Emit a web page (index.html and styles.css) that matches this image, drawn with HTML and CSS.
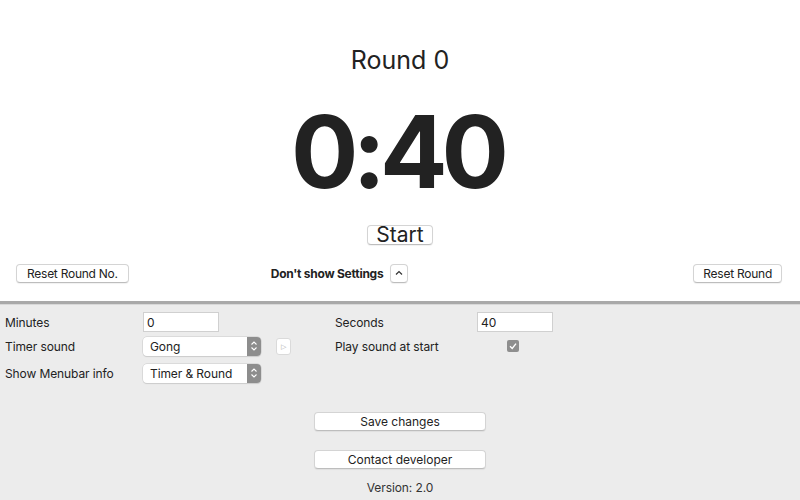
FILE: index.html
```html
<!DOCTYPE html>
<html lang="en">

<head>
  <meta charset="UTF-8" />
  <title>Round Timer</title>
  <link rel="stylesheet" href="styles.css">
</head>

<body>
  <main class="timer">
    <h1 class="round">Round 0</h1>
    <div class="clock">0:40</div>
    <button class="btn start">Start</button>
  </main>

  <div class="controls">
    <button class="btn small">Reset Round No.</button>
    <div class="toggle">
      <span>Don't show Settings</span>
      <button class="btn chevron">
        <svg width="8" height="6" viewBox="0 0 8 6"><path d="M1 4.5 L4 1.5 L7 4.5" fill="none" stroke="#333" stroke-width="1.2"/></svg>
      </button>
    </div>
    <button class="btn small right">Reset Round</button>
  </div>

  <section class="settings">
    <div class="grid">
      <label>Minutes</label>
      <div><input class="field" type="text" value="0"></div>
      <label>Seconds</label>
      <div><input class="field" type="text" value="40"></div>

      <label>Timer sound</label>
      <div class="with-play">
        <div class="select"><span>Gong</span><i class="stepper"><svg width="8" height="12" viewBox="0 0 8 12"><path d="M1.5 4.5 L4 2 L6.5 4.5 M1.5 7.5 L4 10 L6.5 7.5" fill="none" stroke="#fff" stroke-width="1.1"/></svg></i></div>
        <button class="play">&#9655;</button>
      </div>
      <label>Play sound at start</label>
      <div class="check-cell"><span class="check"><svg width="10" height="10" viewBox="0 0 10 10"><path d="M2 5.2 L4.2 7.4 L8 2.6" fill="none" stroke="#fff" stroke-width="1.4"/></svg></span></div>

      <label class="last">Show Menubar info</label>
      <div class="last"><div class="select"><span>Timer &amp; Round</span><i class="stepper"><svg width="8" height="12" viewBox="0 0 8 12"><path d="M1.5 4.5 L4 2 L6.5 4.5 M1.5 7.5 L4 10 L6.5 7.5" fill="none" stroke="#fff" stroke-width="1.1"/></svg></i></div></div>
    </div>

    <div class="actions">
      <button class="btn wide">Save changes</button>
      <button class="btn wide">Contact developer</button>
      <p class="version">Version: 2.0</p>
    </div>
  </section>
</body>

</html>
```

FILE: styles.css
```css
* {
  margin: 0;
  padding: 0;
  box-sizing: border-box;
}

body {
  font-family: 'Inter', 'Liberation Sans', sans-serif;
  background: #fff;
  color: #222;
  width: 800px;
  height: 500px;
  overflow: hidden;
}

.btn {
  font-family: inherit;
  background: #fff;
  border: 1px solid #d4d4d4;
  border-bottom-color: #bdbdbd;
  border-radius: 4px;
  color: #222;
  box-shadow: 0 1px 1px rgba(0, 0, 0, 0.06);
}

/* Timer */
.timer {
  display: flex;
  flex-direction: column;
  align-items: center;
  padding-top: 43px;
}

.round {
  font-size: 25px;
  font-weight: 400;
  line-height: 34px;
  color: #222;
}

.clock {
  font-size: 100px;
  font-weight: 700;
  line-height: 120px;
  margin-top: 15px;
  margin-bottom: -3px;
  letter-spacing: -6px;
  padding-right: 6px;
  color: #222;
}

.start {
  margin-top: 16px;
  width: 66px;
  height: 20px;
  font-size: 21px;
  line-height: 18px;
}

/* Controls row */
.controls {
  display: flex;
  align-items: center;
  padding: 0 18px 0 16px;
  margin-top: 18px;
  height: 20px;
  font-size: 12px;
  letter-spacing: -0.25px;
}

.small {
  height: 19px;
  font-size: 12px;
  letter-spacing: -0.25px;
  padding: 0 10px;
}

.toggle {
  display: flex;
  align-items: center;
  gap: 7px;
  margin-left: 142px;
  font-weight: 700;
}

.chevron {
  width: 18px;
  height: 19px;
  display: flex;
  align-items: center;
  justify-content: center;
}

.right {
  margin-left: auto;
  padding: 0 9px;
}

/* Settings panel */
.settings {
  margin-top: 18px;
  height: 200px;
  background: #ececec;
  border-top: 3px solid #a9a9a9;
  box-shadow: inset 0 1px 0 #d8d8d8;
  font-size: 12px;
  letter-spacing: -0.1px;
  color: #222;
}

.grid {
  display: grid;
  grid-template-columns: 138px 192px 142px auto;
  grid-template-rows: 20px 20px 20px;
  row-gap: 4px;
  align-items: center;
  padding: 8px 0 0 5px;
}

.grid .last {
  margin-top: 6px;
}

.field {
  width: 76px;
  height: 20px;
  border: 1px solid #d0d0d0;
  background: #fff;
  font-family: inherit;
  font-size: 12px;
  padding: 0 3px;
  color: #222;
}

.with-play {
  display: flex;
  align-items: center;
  gap: 15px;
}

.select {
  width: 118px;
  height: 19px;
  display: flex;
  align-items: center;
  justify-content: space-between;
  background: #fff;
  border-radius: 4px;
  box-shadow: 0 0 0 0.5px #c9c9c9, 0 1px 1px rgba(0, 0, 0, 0.12);
  padding-left: 7px;
  overflow: hidden;
}

.stepper {
  width: 14px;
  height: 19px;
  background: #8d8d8d;
  display: flex;
  align-items: center;
  justify-content: center;
}

.play {
  width: 15px;
  height: 17px;
  border: 1px solid #dadada;
  border-radius: 3px;
  background: #fff;
  color: #aaa;
  font-size: 7px;
  line-height: 15px;
}

.check-cell {
  padding-left: 30px;
}

.check {
  display: flex;
  align-items: center;
  justify-content: center;
  width: 12px;
  height: 12px;
  border-radius: 2px;
  background: #8e8e8e;
}

.actions {
  display: flex;
  flex-direction: column;
  align-items: center;
  margin-top: 32px;
}

.wide {
  width: 172px;
  height: 19px;
  font-size: 12px;
  margin-bottom: 19px;
}

.wide + .wide {
  margin-bottom: 11px;
}

.version {
  font-size: 12px;
  color: #333;
}
```
